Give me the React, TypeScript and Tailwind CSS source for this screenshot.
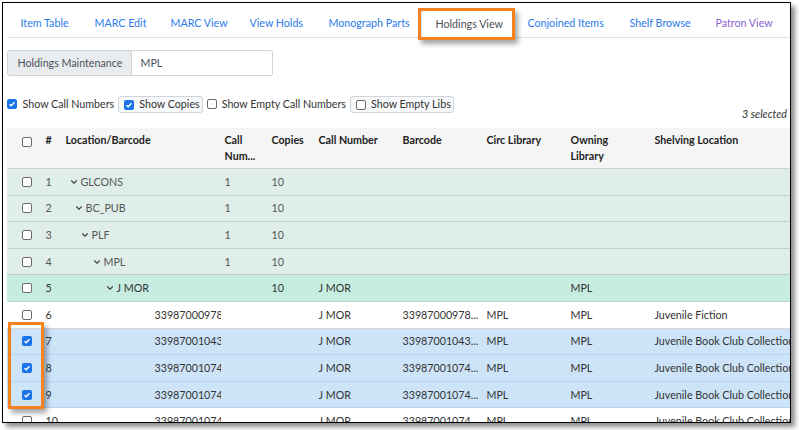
import React from 'react';
import { ChevronDown } from 'lucide-react';

type Row = {
  n: number;
  kind: 'org' | 'call' | 'copy';
  depth: number;
  loc: string;
  callNum?: string;
  copies?: string;
  callNumber?: string;
  barcode?: string;
  circ?: string;
  owning?: string;
  shelving?: string;
  selected?: boolean;
};

// tab label + fixed width so labels land where the original put them
const tabs: [string, string][] = [
  ['Item Table', 'w-[74px]'],
  ['MARC Edit', 'w-[76px]'],
  ['MARC View', 'w-[79px]'],
  ['View Holds', 'w-[79px]'],
  ['Monograph Parts', 'w-[106px]'],
  ['Holdings View', 'w-[93px]'],
  ['Conjoined Items', 'w-[102px]'],
  ['Shelf Browse', 'w-[86px]'],
  ['Patron View', 'w-[80px]'],
];

const rows: Row[] = [
  { n: 1, kind: 'org', depth: 0, loc: 'GLCONS', callNum: '1', copies: '10' },
  { n: 2, kind: 'org', depth: 1, loc: 'BC_PUB', callNum: '1', copies: '10' },
  { n: 3, kind: 'org', depth: 2, loc: 'PLF', callNum: '1', copies: '10' },
  { n: 4, kind: 'org', depth: 3, loc: 'MPL', callNum: '1', copies: '10' },
  { n: 5, kind: 'call', depth: 4, loc: 'J MOR', copies: '10', callNumber: 'J MOR', owning: 'MPL' },
  { n: 6, kind: 'copy', depth: 5, loc: '339870009787', callNumber: 'J MOR', barcode: '33987000978...', circ: 'MPL', owning: 'MPL', shelving: 'Juvenile Fiction' },
  { n: 7, kind: 'copy', depth: 5, loc: '339870010432', callNumber: 'J MOR', barcode: '33987001043...', circ: 'MPL', owning: 'MPL', shelving: 'Juvenile Book Club Collection', selected: true },
  { n: 8, kind: 'copy', depth: 5, loc: '339870010746', callNumber: 'J MOR', barcode: '33987001074...', circ: 'MPL', owning: 'MPL', shelving: 'Juvenile Book Club Collection', selected: true },
  { n: 9, kind: 'copy', depth: 5, loc: '339870010746', callNumber: 'J MOR', barcode: '33987001074...', circ: 'MPL', owning: 'MPL', shelving: 'Juvenile Book Club Collection', selected: true },
  { n: 10, kind: 'copy', depth: 5, loc: '339870010747', callNumber: 'J MOR', barcode: '33987001074...', circ: 'MPL', owning: 'MPL', shelving: 'Juvenile Book Club Collection' },
];

const orgIndent = ['pl-[9px]', 'pl-[14px]', 'pl-[20px]', 'pl-[32px]', 'pl-[45px]'];

function Check({ on }: { on?: boolean }) {
  if (on) {
    return (
      <span className="inline-flex h-[10px] w-[10px] shrink-0 items-center justify-center rounded-[2px] bg-[#1a73e8]">
        <svg width="8" height="8" viewBox="0 0 8 8">
          <path d="M1.5 4.2 L3.2 5.8 L6.5 2.2" stroke="white" strokeWidth="1.4" fill="none" />
        </svg>
      </span>
    );
  }
  return <span className="inline-block h-[10px] w-[10px] shrink-0 rounded-[2px] border border-[#6b6b6b] bg-white" />;
}

const grid =
  'grid grid-cols-[33px_20px_161px_45px_47px_84px_84px_84px_84px_220px]';

function TableRow({ r }: { r: Row }) {
  let bg = 'bg-white border-[#d6d6d6]';
  if (r.kind === 'org') bg = 'bg-[#dfeee8] border-[#c4cfcb]';
  if (r.kind === 'call') bg = 'bg-[#c6ede0] border-[#b7d9cd]';
  if (r.selected) bg = 'bg-[#cce3f8] border-[#b3d4f2]';
  const dim = r.kind === 'org' ? 'text-[#555]' : 'text-[#333]';

  return (
    <div className={`${grid} h-[26.6px] items-center whitespace-nowrap border-b ${bg} ${dim}`}>
      <div className="pl-[15px] flex items-center">
        <Check on={r.selected} />
      </div>
      <div className="pl-[6px]">{r.n}</div>
      <div className="overflow-hidden">
        {r.kind === 'copy' ? (
          <span className="pl-[95px]">{r.loc}</span>
        ) : (
          <span className={`flex items-center gap-[2px] ${orgIndent[r.depth]}`}>
            <ChevronDown size={10} strokeWidth={2.6} className="text-[#444]" />
            {r.loc}
          </span>
        )}
      </div>
      <div className="pl-[4px]">{r.callNum}</div>
      <div className="pl-[6px]">{r.copies}</div>
      <div className="pl-[6px]">{r.callNumber}</div>
      <div className="pl-[6px]">{r.barcode}</div>
      <div className="pl-[6px]">{r.circ}</div>
      <div className="pl-[6px]">{r.owning}</div>
      <div className="pl-[6px]">{r.shelving}</div>
    </div>
  );
}

export default function App() {
  return (
    <div className="h-[430px] w-[799px] bg-white pl-[2px] pt-[2px] text-[10.7px] text-[#333] font-['Lato','Noto_Sans',sans-serif]">
      <div className="relative h-[421px] w-[789px] overflow-hidden border-[1.5px] border-black bg-white pl-[3.5px] pt-[4px] shadow-[4px_4px_5px_rgba(0,0,0,0.45)]">
        {/* Tabs */}
        <div className="flex h-[31px] items-end whitespace-nowrap border-b border-[#dee2e6]">
          {tabs.map(([t, w]) => {
            const active = t === 'Holdings View';
            const color = active ? 'text-[#495057]' : t === 'Patron View' ? 'text-[#8a63d2]' : 'text-[#2b7bea]';
            return (
              <div
                key={t}
                className={`relative flex h-[28px] shrink-0 items-center pl-[14px] ${w} ${color} ${
                  active ? '-mb-px border border-b-white border-[#dee2e6] bg-white rounded-t-[3px] pl-[13px]' : ''
                }`}
              >
                {t}
                {active && (
                  <span className="pointer-events-none absolute -left-[4px] -right-[2px] -top-[3px] bottom-[-3px] border-[3px] border-[#f5821f] shadow-[3px_4px_5px_rgba(0,0,0,0.35)]" />
                )}
              </div>
            );
          })}
        </div>

        {/* Holdings Maintenance input group */}
        <div className="mt-[12px] flex h-[26px]">
          <div className="flex w-[125px] items-center rounded-l-[3px] border border-[#ced4da] bg-[#e9ecef] pl-[10px] text-[#495057]">
            Holdings Maintenance
          </div>
          <div className="flex w-[141px] items-center rounded-r-[3px] border border-l-0 border-[#ced4da] pl-[9px] text-[#495057]">
            MPL
          </div>
        </div>

        {/* Options */}
        <div className="mt-[20px] flex h-[17px] items-center gap-[4px] whitespace-nowrap">
          <label className="flex items-center gap-[6px]">
            <Check on />
            <span>Show Call Numbers</span>
          </label>
          <label className="flex h-[17px] items-center gap-[5px] rounded-[3px] border border-[#ced4da] bg-[#f8f9fa] pl-[5px] pr-[2px]">
            <Check on />
            <span>Show Copies</span>
          </label>
          <label className="flex items-center gap-[5px]">
            <Check />
            <span>Show Empty Call Numbers</span>
          </label>
          <label className="flex h-[17px] items-center gap-[5px] rounded-[3px] border border-[#ced4da] bg-[#f8f9fa] pl-[5px] pr-[2px]">
            <Check />
            <span>Show Empty Libs</span>
          </label>
        </div>
        <div className="-mt-[6px] flex justify-end pr-[3px] italic leading-[14px] text-[#333]">3 selected</div>

        {/* Table */}
        <div className="mt-[7px]">
          <div className={`${grid} h-[41px] items-start whitespace-nowrap border-b border-[#d0d0d0] bg-[#f5f5f5] pt-[4px] font-bold leading-[16px] text-[#222]`}>
            <div className="pl-[15px] pt-[3px]">
              <Check />
            </div>
            <div className="pl-[6px]">#</div>
            <div className="pl-[6px]">Location/Barcode</div>
            <div className="pl-[4px]">
              Call
              <br />
              Num...
            </div>
            <div className="pl-[6px]">Copies</div>
            <div className="pl-[6px]">Call Number</div>
            <div className="pl-[6px]">Barcode</div>
            <div className="pl-[6px]">Circ Library</div>
            <div className="pl-[6px]">
              Owning
              <br />
              Library
            </div>
            <div className="pl-[6px]">Shelving Location</div>
          </div>
          {rows.map((r) => (
            <TableRow key={r.n} r={r} />
          ))}
        </div>

        {/* Highlight around selected checkboxes */}
        <span className="pointer-events-none absolute left-[4.5px] top-[318.5px] h-[87px] w-[36px] border-[3px] border-[#f5821f] shadow-[3px_4px_5px_rgba(0,0,0,0.35)]" />
      </div>
    </div>
  );
}
